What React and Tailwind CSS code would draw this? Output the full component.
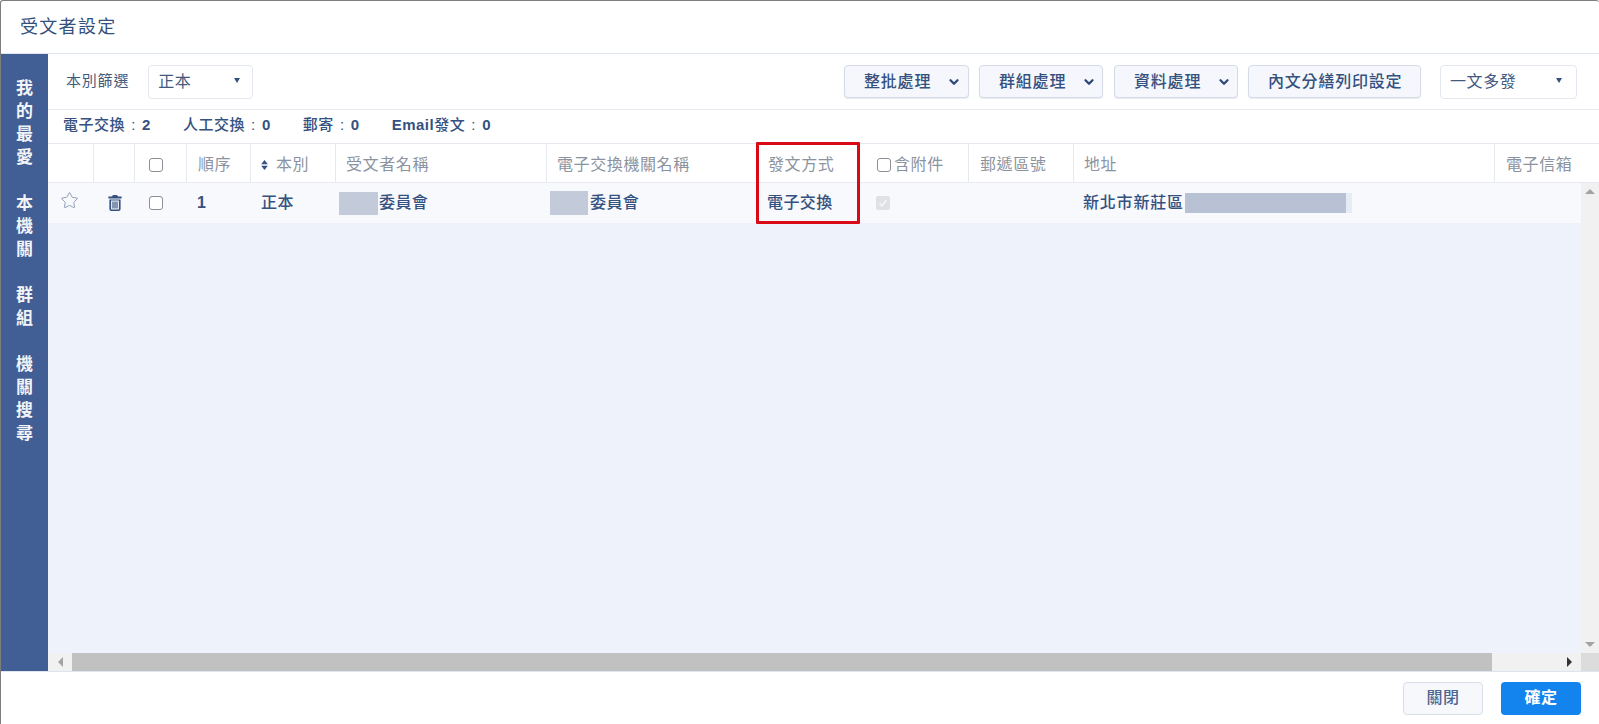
import { ChevronDown, Star } from 'lucide-react'

const FONT = { fontFamily: '"Liberation Sans", "Noto Sans CJK TC", sans-serif' }

const headCols = 'grid grid-cols-[46px_41px_52px_64px_85px_211px_210px_103px_109px_105px_421px_104px]'
const bodyCols = 'grid grid-cols-[46px_41px_52px_64px_85px_211px_210px_103px_109px_105px_421px_86px]'

const sideGroups = [
  ['我', '的', '最', '愛'],
  ['本', '機', '關'],
  ['群', '組'],
  ['機', '關', '搜', '尋'],
]

const stats = [
  ['電子交換', '2'],
  ['人工交換', '0'],
  ['郵寄', '0'],
  [<><span className="font-bold">Email</span>發文</>, '0'],
]

function ActionButton({ children, width, chevron = true }) {
  return (
    <button
      type="button"
      className={`h-[33px] ${width} flex items-center gap-[16px] rounded-[4px] border border-[#d5dce8] bg-[#f5f7fc] pl-[19px] text-[16px] font-medium tracking-[0.8px] text-[#34517f] shadow-[0_1px_1px_rgba(60,80,120,0.12)]`}
    >
      <span>{children}</span>
      {chevron && <ChevronDown size={14} strokeWidth={4} className="text-[#2f4a78]" />}
    </button>
  )
}

function SelectBox({ value, width, arrowGap }) {
  return (
    <div className={`h-[34px] ${width} flex items-center justify-between rounded-[4px] border border-[#e3e7ef] bg-white pl-[9px] ${arrowGap} text-[16px] tracking-[0.6px] text-[#435a80]`}>
      <span>{value}</span>
      <span className="mb-[3px] h-0 w-0 border-x-[3.5px] border-t-[5px] border-x-transparent border-t-[#35507c]" />
    </div>
  )
}

function Check({ disabled }) {
  if (disabled) {
    return (
      <span className="flex h-[14px] w-[14px] items-center justify-center rounded-[2px] bg-[#dfe1e5]">
        <svg viewBox="0 0 12 12" className="h-[12px] w-[12px]" fill="none" stroke="#f5f5f5" strokeWidth="1.8">
          <path d="M2.5 6.2 5 8.8 9.5 3" />
        </svg>
      </span>
    )
  }
  return <span className="block h-[14px] w-[14px] rounded-[3px] border border-[#8a8f98] bg-white" />
}

function TrashIcon() {
  return (
    <svg viewBox="0 0 14 16" className="h-[16px] w-[14px]" fill="#34517f">
      <path d="M5 0h4l1 1.6h3.6V3.4H.4V1.6H4z" />
      <path fillRule="evenodd" d="M1.4 4.4h11.2V14a2 2 0 0 1-2 2H3.4a2 2 0 0 1-2-2zM3.1 5.6V14c0 .3.2.5.5.5h6.8c.3 0 .5-.2.5-.5V5.6z" />
      <path d="M4.4 6.4h1.2v7H4.4zM6.4 6.4h1.2v7H6.4zM8.4 6.4h1.2v7H8.4z" />
    </svg>
  )
}

function HeadCell({ children, className = 'pl-[10px]' }) {
  return (
    <div className={`flex items-center border-r border-[#e6e9f0] pt-[3px] text-[16px] tracking-[0.6px] text-[#8b93a0] ${className}`}>
      {children}
    </div>
  )
}

function Redacted({ className = '' }) {
  return <span className={`inline-block ${className}`} />
}

export default function App() {
  return (
    <div className="flex h-[724px] w-[1599px] flex-col overflow-hidden rounded-t-[3px] border-t border-l border-[#7d7d7d] bg-white" style={FONT}>
      {/* 標題 */}
      <div className="flex h-[53px] shrink-0 items-center border-b border-[#dfe5ee] pl-[19px] text-[18px] tracking-[1.3px] text-[#34507d]">
        受文者設定
      </div>

      <div className="flex min-h-0 flex-1">
        {/* 左側分類 */}
        <div className="flex w-[47px] shrink-0 flex-col items-center gap-[23px] bg-[#415f94] pt-[23px]">
          {sideGroups.map((group, i) => (
            <div key={i} className="flex flex-col text-[17px] font-bold leading-[23px] text-[#f2f4f8]">
              {group.map((c, j) => <span key={j}>{c}</span>)}
            </div>
          ))}
        </div>

        <div className="flex min-w-0 flex-1 flex-col">
          {/* 工具列 */}
          <div className="flex h-[56px] shrink-0 items-center border-b border-[#e6e9f0] pl-[18px] pr-[22px]">
            <span className="mr-[19px] text-[15px] tracking-[0.8px] text-[#435a80]">本別篩選</span>
            <SelectBox value="正本" width="w-[105px]" arrowGap="pr-[12px]" />
            <div className="ml-auto flex items-center">
              <ActionButton width="w-[125px]">整批處理</ActionButton>
              <div className="w-[10px]" />
              <ActionButton width="w-[124px]">群組處理</ActionButton>
              <div className="w-[11px]" />
              <ActionButton width="w-[124px]">資料處理</ActionButton>
              <div className="w-[10px]" />
              <ActionButton width="w-[173px]" chevron={false}>內文分繕列印設定</ActionButton>
              <div className="w-[19px]" />
              <SelectBox value="一文多發" width="w-[137px]" arrowGap="pr-[14px]" />
            </div>
          </div>

          {/* 統計 */}
          <div className="flex h-[34px] shrink-0 items-center gap-[32px] border-b border-[#e6e9f0] pb-[3px] pl-[15px] text-[15px] font-medium tracking-[0.5px] text-[#34517f]">
            {stats.map(([label, count], i) => (
              <span key={i} className="whitespace-pre">
                {label}
                <span className="mx-[1.5px]"> : </span>
                <span className="font-bold">{count}</span>
              </span>
            ))}
          </div>

          {/* 表頭 */}
          <div className={`${headCols} h-[39px] shrink-0 border-b border-[#e6e9f0]`}>
            <HeadCell />
            <HeadCell />
            <HeadCell className="pl-[14px]"><Check /></HeadCell>
            <HeadCell className="pl-[11px]">順序</HeadCell>
            <HeadCell>
              <svg viewBox="0 0 8 12" className="mr-[8px] h-[10px] w-[7px]" fill="#34517f">
                <path d="M4 0 8 5H0zM4 12 0 7h8z" />
              </svg>
              本別
            </HeadCell>
            <HeadCell>受文者名稱</HeadCell>
            <HeadCell>電子交換機關名稱</HeadCell>
            <HeadCell className="pl-[11px]">發文方式</HeadCell>
            <HeadCell className="gap-[3px] pl-[17px]"><Check />含附件</HeadCell>
            <HeadCell className="pl-[11px]">郵遞區號</HeadCell>
            <HeadCell>地址</HeadCell>
            <HeadCell className="border-r-0 pl-[11px]">電子信箱</HeadCell>
          </div>

          {/* 內容 */}
          <div className="flex min-h-0 flex-1">
            <div className="flex min-w-0 flex-1 flex-col bg-[#edf2fb]">
              <div className={`${bodyCols} h-[40px] shrink-0 items-center bg-[#f7f9fd] text-[16px] font-medium tracking-[0.4px] text-[#34517f]`}>
                <div className="flex justify-center pr-[3px]">
                  <Star size={19} strokeWidth={1.2} className="mb-[5px] text-[#8d9ab3]" />
                </div>
                <div className="flex justify-center">
                  <TrashIcon />
                </div>
                <div className="pl-[14px]"><Check /></div>
                <div className="pl-[10px] font-bold">1</div>
                <div className="pl-[10px]">正本</div>
                <div className="flex items-center pl-[3px]">
                  <Redacted className="mr-[1px] h-[23px] w-[39px] bg-[#c3cbdb]" />
                  委員會
                </div>
                <div className="flex items-center pl-[3px]">
                  <Redacted className="mr-[2px] h-[24px] w-[38px] bg-[#c3cbdb]" />
                  委員會
                </div>
                <div className="pl-[10px]">電子交換</div>
                <div className="flex pl-[16px]"><Check disabled /></div>
                <div />
                <div className="flex items-center pl-[9px] tracking-[0.8px]">
                  新北市新莊區
                  <Redacted className="ml-[1px] h-[20px] w-[161px] bg-[#b9c2d4]" />
                  <Redacted className="h-[20px] w-[6px] bg-[#e6ecf6]" />
                </div>
              </div>
            </div>

            {/* 垂直捲軸 */}
            <div className="flex w-[18px] shrink-0 flex-col items-center justify-between bg-[#f1f1f1] py-[6px]">
              <span className="h-0 w-0 border-x-[5px] border-b-[5px] border-x-transparent border-b-[#a3a3a3]" />
              <span className="h-0 w-0 border-x-[5px] border-t-[5px] border-x-transparent border-t-[#a3a3a3]" />
            </div>
          </div>

          {/* 水平捲軸 */}
          <div className="flex h-[18px] shrink-0 bg-[#f1f1f1]">
            <div className="flex w-[24px] shrink-0 items-center justify-center">
              <span className="h-0 w-0 border-y-[5px] border-r-[5px] border-y-transparent border-r-[#a3a3a3]" />
            </div>
            <div className="w-[1420px] shrink-0 bg-[#c1c1c1]" />
            <div className="flex flex-1 items-center justify-end pr-[9px]">
              <span className="h-0 w-0 border-y-[5px] border-l-[5px] border-y-transparent border-l-[#333333]" />
            </div>
            <div className="w-[18px] shrink-0 bg-[#dcdcdc]" />
          </div>
        </div>
      </div>

      {/* 底部按鈕 */}
      <div className="flex h-[53px] shrink-0 items-center justify-end gap-[18px] border-t border-[#dfe5ee] pr-[18px]">
        <button type="button" className="h-[33px] w-[80px] rounded-[4px] border border-[#d9dfe9] bg-[#f6f8fc] text-[16px] font-medium tracking-[0.4px] text-[#4d6690]">
          關閉
        </button>
        <button type="button" className="h-[33px] w-[80px] rounded-[4px] bg-[#1384ee] text-[16px] font-bold tracking-[0.4px] text-white">
          確定
        </button>
      </div>

      {/* 紅框標示 */}
      <div className="pointer-events-none absolute left-[756px] top-[142px] h-[82px] w-[104px] rounded-[1px] border-[3px] border-[#d90a16]" />
    </div>
  )
}
